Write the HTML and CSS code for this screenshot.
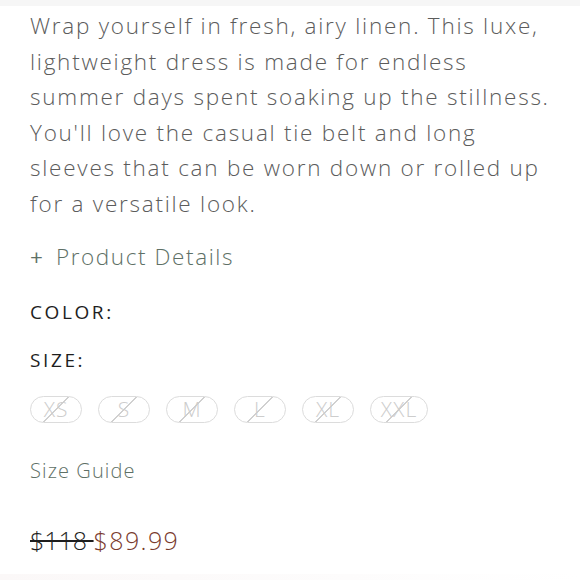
FILE: index.html
```html
<!DOCTYPE html>
<html>
<head>
<meta charset="utf-8">
<link rel="stylesheet" href="styles.css">
</head>
<body>
<div class="topbar"></div>
<main class="product">
  <p class="desc">Wrap yourself in fresh, airy linen. This luxe,<br>lightweight dress is made for endless<br>summer days spent soaking up the stillness.<br>You'll love the casual tie belt and long<br>sleeves that can be worn down or rolled up<br>for a versatile look.</p>
  <div class="details"><span class="plus">+</span> Product Details</div>
  <div class="label color-label">COLOR:</div>
  <div class="label size-label">SIZE:</div>
  <div class="sizes">
    <span class="pill">XS</span>
    <span class="pill">S</span>
    <span class="pill">M</span>
    <span class="pill">L</span>
    <span class="pill">XL</span>
    <span class="pill wide">XXL</span>
  </div>
  <div class="guide">Size Guide</div>
  <div class="price"><span class="old">$118 </span><span class="new">$89.99</span></div>
</main>
<div class="bottombar"></div>
</body>
</html>
```
FILE: styles.css
```css
html, body {
  margin: 0;
  padding: 0;
  background: #fff;
  height: 580px;
  overflow: hidden;
}
body {
  font-family: "Open Sans", sans-serif;
  font-weight: 300;
  display: flex;
  flex-direction: column;
}
.topbar {
  height: 6px;
  background: #f6f6f6;
}
.product {
  padding: 0 0 0 30px;
  flex: 1;
}
.desc {
  margin: 2px 0 0 0;
  font-size: 22.5px;
  letter-spacing: 1.75px;
  line-height: 35.6px;
  color: #5c5c5c;
}
.details {
  margin-top: 20px;
  font-size: 22.5px;
  letter-spacing: 1.6px;
  color: #5e7066;
  line-height: 30px;
}
.plus {
  display: inline-block;
  margin-right: 4px;
  font-weight: 400;
}
.label {
  font-size: 19px;
  color: #1e1e1e;
  letter-spacing: 2.6px;
  font-weight: 400;
  line-height: 24px;
}
.color-label { margin-top: 28px; }
.size-label { margin-top: 24px; }
.sizes {
  display: flex;
  gap: 16px;
  margin-top: 24px;
}
.pill {
  box-sizing: border-box;
  width: 52px;
  height: 27px;
  border: 1.5px solid #dcdcdc;
  border-radius: 14px;
  display: flex;
  align-items: center;
  justify-content: center;
  font-size: 21px;
  letter-spacing: 1px;
  color: #cdcdcd;
  background: linear-gradient(135deg, transparent calc(50% - 0.8px), #d0d0d0 calc(50% - 0.8px), #d0d0d0 calc(50% + 0.8px), transparent calc(50% + 0.8px));
}
.pill.wide { width: 58px; }
.guide {
  margin-top: 35px;
  font-size: 20px;
  letter-spacing: 1.1px;
  color: #5e7066;
  line-height: 26px;
}
.price {
  margin-top: 40px;
  font-size: 25px;
  line-height: 32px;
}
.old {
  color: #1e1e1e;
  letter-spacing: 0;
  text-decoration: line-through;
  text-decoration-thickness: 1.5px;
}
.new {
  color: #7a3b2e;
  letter-spacing: 1.4px;
}
.bottombar {
  height: 6px;
  background: linear-gradient(to right, #fbf8f8, #fdfcfc 60%, #fff);
}
```
